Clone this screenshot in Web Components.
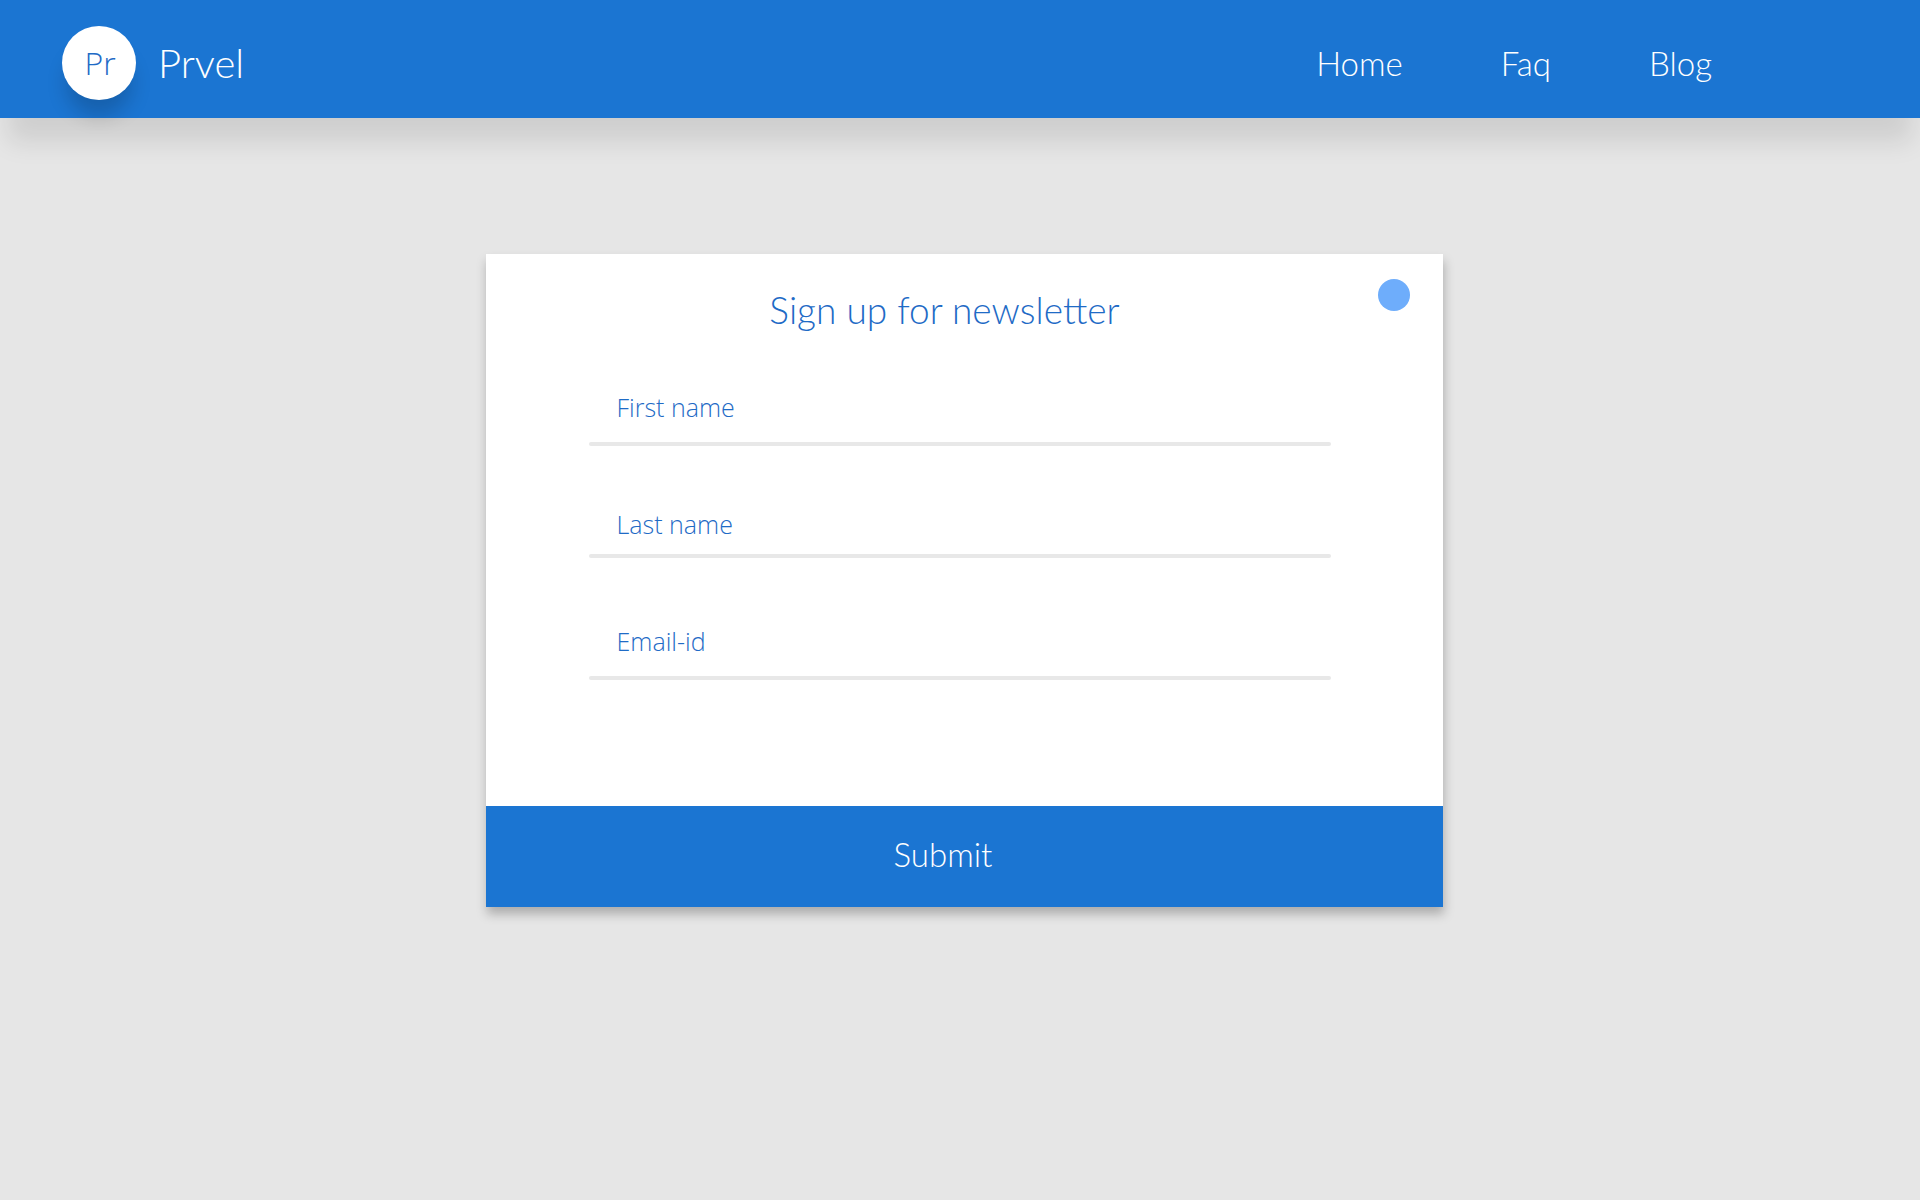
<!DOCTYPE html>
<html lang="en">
<head>
<meta charset="utf-8">
<meta name="viewport" content="width=device-width, initial-scale=1">
<title>Prvel</title>
<style>
  :root { --brand: #1b75d2; --ink: #1f6bc6; --rule: #e8e8e8; --label-font: "Open Sans", "Noto Sans", sans-serif; }
  body { margin: 0; min-height: 100vh; background: #e6e6e6; font-family: Lato, "Open Sans", sans-serif; font-weight: 300; }
</style>
</head>
<body>
<prvel-page></prvel-page>
<script>
const attach = (host, html) => { host.attachShadow({ mode: "open" }).innerHTML = html; };

class PrvelLogo extends HTMLElement {
  constructor() {
    super();
    attach(this, `
      <style>
        :host { display: block; }
        a { display: flex; align-items: center; gap: 22px; color: #fff; text-decoration: none; }
        .badge { display: grid; place-items: center; box-sizing: border-box; width: 74px; height: 74px; padding-left: 2px; border-radius: 50%;
          background: #fff; color: var(--ink); font: 300 32px/44px "Open Sans", sans-serif;
          box-shadow: 0 20px 20px -4px rgba(0,0,0,.18); }
        .name { font-size: 40px; line-height: 48px; }
      </style>
      <a href="#home"><span class="badge">Pr</span><span class="name"><slot></slot></span></a>`);
  }
}
customElements.define("prvel-logo", PrvelLogo);

class PrvelNavLink extends HTMLElement {
  constructor() {
    super();
    attach(this, `
      <style>
        :host { display: block; }
        a { color: #fff; text-decoration: none; font-size: 33px; line-height: 40px; }
      </style>
      <a><slot></slot></a>`);
  }
  connectedCallback() { this.shadowRoot.querySelector("a").href = this.getAttribute("to"); }
}
customElements.define("prvel-nav-link", PrvelNavLink);

class PrvelHeader extends HTMLElement {
  constructor() {
    super();
    attach(this, `
      <style>
        :host { display: block; }
        header { display: flex; align-items: center; justify-content: space-between; box-sizing: border-box;
          padding: 26px 208px 18px 62px; background: var(--brand); box-shadow: 0 32px 24px -8px rgba(0,0,0,.1); }
        nav { display: flex; gap: 98px; }
      </style>
      <header><slot name="logo"></slot><nav aria-label="Main"><slot></slot></nav></header>`);
  }
}
customElements.define("prvel-header", PrvelHeader);

class PrvelField extends HTMLElement {
  constructor() {
    super();
    attach(this, `
      <style>
        :host { display: block; }
        .row { display: flex; gap: 16px; padding: 0 28px 19px; position: relative; }
        .row::after { content: ""; position: absolute; inset: auto 0 -4px; height: 4px; border-radius: 2px; background: var(--rule); }
        :host([snug]) .row { padding-bottom: 14px; }
        label, input { font: 300 25px/32px var(--label-font); color: var(--ink); }
        input { flex: 1; min-width: 0; padding: 0; border: 0; outline: 0; background: none; }
      </style>
      <div class="row"><label for="value"><slot></slot></label><input id="value"></div>`);
  }
  connectedCallback() { this.shadowRoot.querySelector("input").type = this.getAttribute("type") || "text"; }
}
customElements.define("prvel-field", PrvelField);

class PrvelSignup extends HTMLElement {
  constructor() {
    super();
    attach(this, `
      <style>
        :host { display: block; width: 100%; max-width: 957px; }
        form { background: #fff; box-shadow: 1px 7px 10px rgba(0,0,0,.25); }
        .top { display: flex; align-items: flex-start; padding: 25px 33px 0 26px; }
        h1 { flex: 1; margin: 7px 0 0; text-align: center; color: var(--ink); font-weight: 300; font-size: 37px; line-height: 48px; }
        .close { width: 32px; height: 32px; padding: 0; border: 0; border-radius: 50%; background: #6eadfb; }
        .fields { display: grid; grid-auto-rows: 117px; align-items: start; padding: 57px 112px 64px 103px; }
        .submit { display: block; width: 100%; padding: 24px 42px 29px 0; border: 0; background: var(--brand); color: #fff;
          font: inherit; font-size: 33px; line-height: 48px; }
      </style>
      <form>
        <div class="top"><h1><slot name="title"></slot></h1><button class="close" type="button" aria-label="Close"></button></div>
        <div class="fields"><slot></slot></div>
        <button class="submit" type="submit"><slot name="action"></slot></button>
      </form>`);
  }
}
customElements.define("prvel-signup", PrvelSignup);

class PrvelPage extends HTMLElement {
  constructor() {
    super();
    attach(this, `
      <style>
        :host { display: block; }
        main { display: flex; justify-content: center; padding: 136px 16px 64px 24px; }
      </style>
      <prvel-header>
        <prvel-logo slot="logo">Prvel</prvel-logo>
        <prvel-nav-link to="#home">Home</prvel-nav-link>
        <prvel-nav-link to="#faq">Faq</prvel-nav-link>
        <prvel-nav-link to="#blog">Blog</prvel-nav-link>
      </prvel-header>
      <main>
        <prvel-signup>
          <span slot="title">Sign up for newsletter</span>
          <prvel-field>First name</prvel-field>
          <prvel-field snug>Last name</prvel-field>
          <prvel-field type="email">Email-id</prvel-field>
          <span slot="action">Submit</span>
        </prvel-signup>
      </main>`);
  }
}
customElements.define("prvel-page", PrvelPage);
</script>
</body>
</html>
